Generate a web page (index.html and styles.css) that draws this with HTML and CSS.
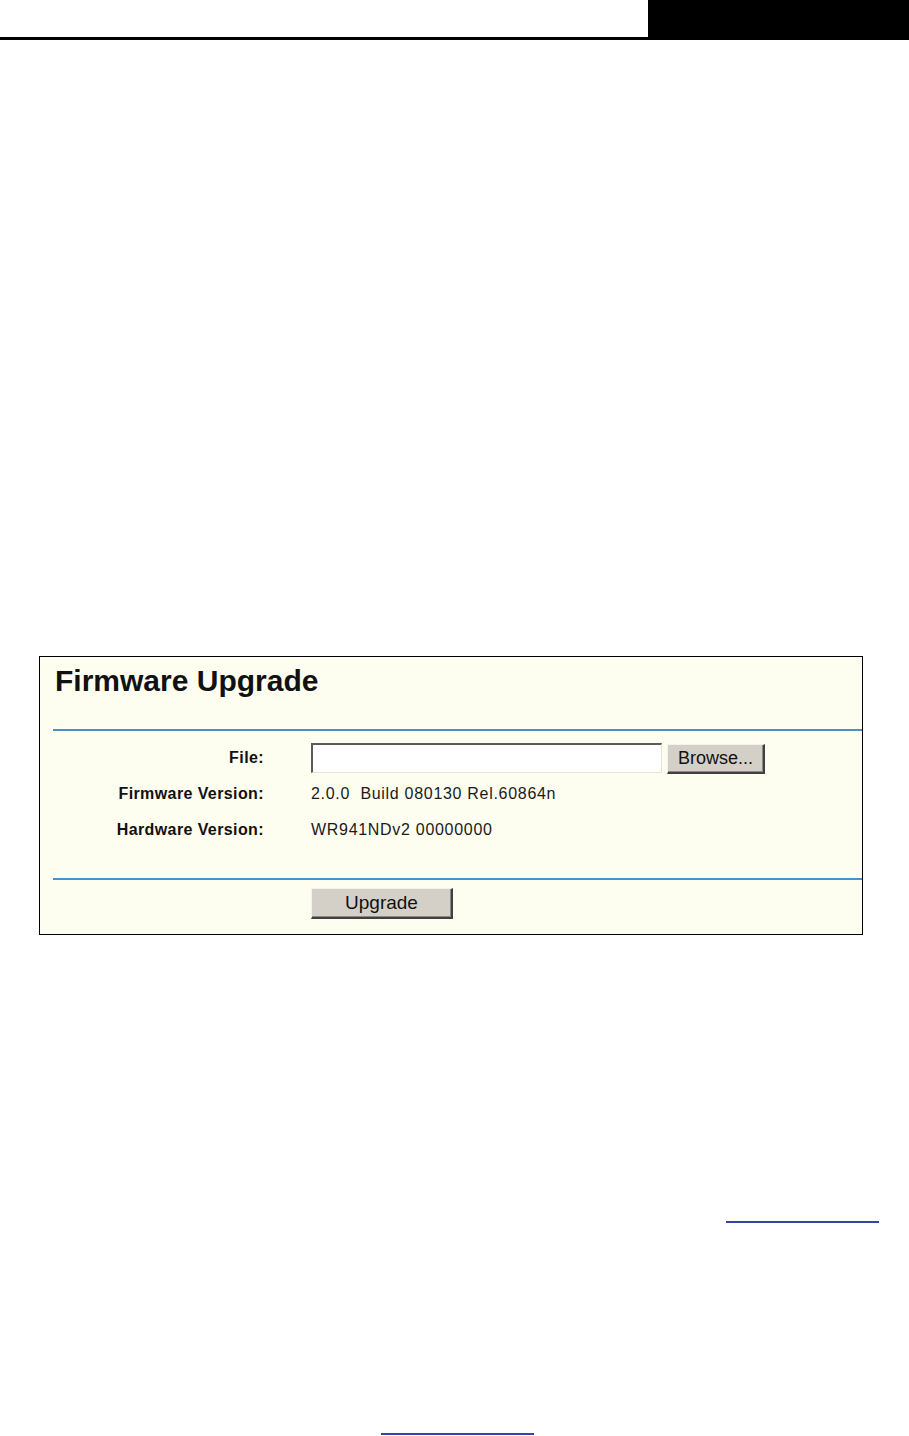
FILE: index.html
```html
<!DOCTYPE html>
<html>
<head>
<meta charset="utf-8">
<link rel="stylesheet" href="styles.css">
</head>
<body>
<div class="page-header">
  <div class="header-rule"></div>
  <div class="header-block"></div>
</div>

<div class="panel">
  <div class="panel-title">Firmware Upgrade</div>
  <div class="panel-rule"></div>
  <div class="form-rows">
    <div class="form-row">
      <div class="form-label">File:</div>
      <div class="form-value">
        <span class="file-input"></span>
        <span class="btn btn-browse">Browse...</span>
      </div>
    </div>
    <div class="form-row">
      <div class="form-label">Firmware Version:</div>
      <div class="form-value text-value">2.0.0&nbsp; Build 080130 Rel.60864n</div>
    </div>
    <div class="form-row">
      <div class="form-label">Hardware Version:</div>
      <div class="form-value text-value">WR941NDv2 00000000</div>
    </div>
  </div>
  <div class="panel-rule rule-bottom"></div>
  <div class="action-row">
    <span class="btn btn-upgrade">Upgrade</span>
  </div>
</div>

<div class="link-line link-right"><span class="link-mark"></span></div>
<div class="link-line link-left"><span class="link-mark"></span></div>
</body>
</html>
```
FILE: styles.css
```css
html, body {
  margin: 0;
  padding: 0;
  background: #ffffff;
  font-family: "Liberation Sans", Arial, sans-serif;
  color: #000;
}

.page-header {
  display: flex;
  height: 40px;
}
.header-rule {
  flex: 1;
  border-bottom: 3px solid #000;
  box-sizing: border-box;
}
.header-block {
  width: 261px;
  background: #000;
}

.panel {
  margin: 616px 0 0 39px;
  width: 824px;
  box-sizing: border-box;
  border: 1px solid #000;
  background: #fdfdf0;
  padding-bottom: 15px;
}
.panel-title {
  padding: 9px 0 0 15px;
  font-size: 30px;
  line-height: 30px;
  font-weight: bold;
  color: #111;
}
.panel-rule {
  margin: 33px 0 0 13px;
  height: 2px;
  background: #4a90c8;
}
.rule-bottom {
  margin-top: 30px;
}

.form-rows {
  margin-top: 9px;
}
.form-row {
  display: flex;
  align-items: center;
  height: 36px;
}
.form-label {
  width: 224px;
  text-align: right;
  font-size: 16px;
  font-weight: bold;
  letter-spacing: 0.4px;
  color: #111;
}
.form-value {
  margin-left: 47px;
  display: flex;
  align-items: center;
}
.text-value {
  font-size: 16px;
  letter-spacing: 0.7px;
  color: #1a1a1a;
}

.file-input {
  display: block;
  width: 351px;
  height: 30px;
  box-sizing: border-box;
  background: #fff;
  border-top: 2px solid #5a5a5a;
  border-left: 2px solid #5a5a5a;
  border-bottom: 1px solid #e4e4dc;
  border-right: 1px solid #e4e4dc;
}

.btn {
  display: flex;
  align-items: center;
  justify-content: center;
  box-sizing: border-box;
  background: #d4d0c8;
  border-top: 1px solid #f4f2ee;
  border-left: 1px solid #f4f2ee;
  border-right: 2px solid #404040;
  border-bottom: 2px solid #404040;
  box-shadow: inset -1px -1px 0 #8a8a86;
  color: #111;
}
.btn-browse {
  margin-left: 5px;
  margin-top: 2px;
  width: 98px;
  height: 30px;
  font-size: 18px;
}

.action-row {
  margin-top: 8px;
  padding-left: 271px;
  display: flex;
}
.btn-upgrade {
  width: 142px;
  height: 31px;
  font-size: 19px;
}

.link-line {
  display: flex;
}
.link-mark {
  display: block;
  width: 153px;
  height: 2px;
  background: #3344aa;
}
.link-right {
  margin-top: 286px;
  justify-content: flex-end;
  padding-right: 30px;
}
.link-left {
  margin-top: 210px;
  padding-left: 381px;
}
```
